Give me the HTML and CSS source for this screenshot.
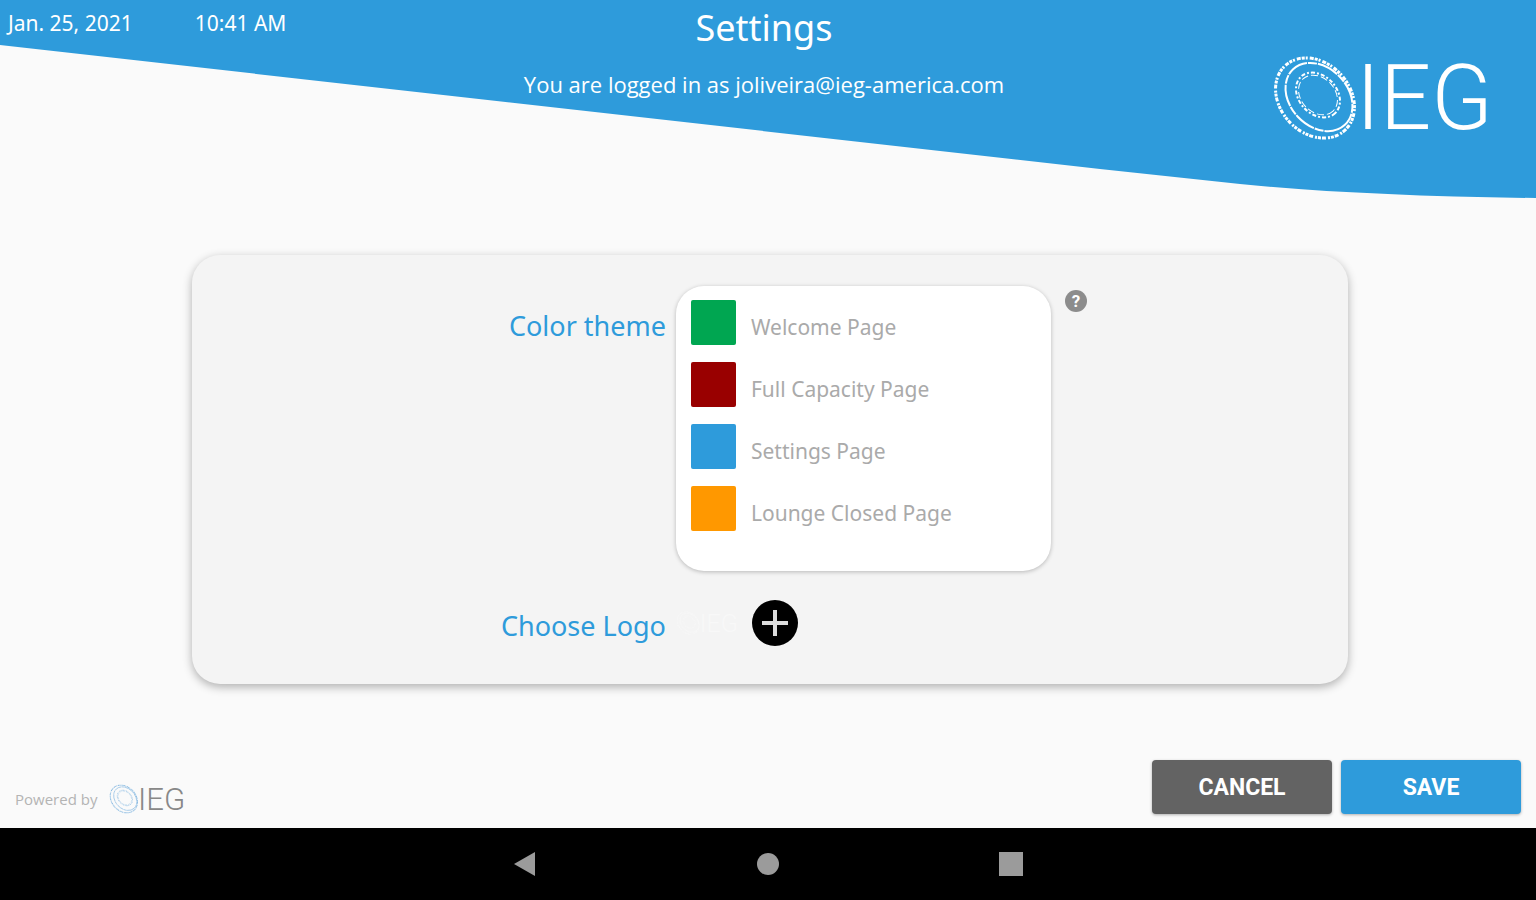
FILE: index.html
```
<!DOCTYPE html>
<html lang="en">
<head>
    <meta charset="UTF-8">
    <meta name="viewport" content="width=device-width, initial-scale=1.0">
    <title>Settings</title>
    <link rel="stylesheet" href="styles.css">
</head>
<body>
    <header class="header">
        <svg class="header-bg" viewBox="0 0 1536 198" preserveAspectRatio="none" aria-hidden="true">
            <path d="M0 0H1536V198Q1360 196 1240 184L1100 169L0 45Z" fill="#2e9bdb"/>
        </svg>
        <div class="datetime">
            <span>Jan. 25, 2021</span>
            <span>10:41 AM</span>
        </div>
        <div class="heading">
            <h1>Settings</h1>
            <p>You are logged in as joliveira@ieg-america.com</p>
        </div>
        <!-- logo is reused below, colored through currentColor and --ring -->
        <svg class="header-logo" viewBox="0 0 220 86" role="img" aria-label="IEG">
            <g id="ieg-logo">
                <g class="ring" fill="none">
                    <ellipse cx="43" cy="43" rx="44" ry="35" transform="rotate(47 43 43)" stroke-width="3" stroke-dasharray="3 1 2 2 4 1"/>
                    <ellipse cx="47" cy="42" rx="38" ry="29" transform="rotate(47 47 42)" stroke-width="2" stroke-dasharray="22 1 9 1"/>
                    <ellipse cx="46" cy="40" rx="25" ry="19" transform="rotate(47 46 40)" stroke-width="2" stroke-dasharray="4 2 2 2"/>
                    <ellipse cx="46" cy="40" rx="22" ry="17" transform="rotate(47 46 40)" stroke-width="1" stroke-dasharray="7 3"/>
                </g>
                <text x="84" y="74" class="logo-text">IEG</text>
            </g>
        </svg>
    </header>

    <main class="card">
        <h2 class="theme-label">Color theme</h2>
        <div class="theme-panel">
            <label><input type="color" value="#00a651">Welcome Page</label>
            <label><input type="color" value="#990000">Full Capacity Page</label>
            <label><input type="color" value="#2e9bdb">Settings Page</label>
            <label><input type="color" value="#ff9800">Lounge Closed Page</label>
        </div>
        <button type="button" class="help" aria-label="Help">?</button>

        <h2 class="logo-label">Choose Logo</h2>
        <div class="logo-picker">
            <svg class="logo-preview" viewBox="0 0 220 86" aria-hidden="true"><use href="#ieg-logo"/></svg>
            <button type="button" class="add" aria-label="Add logo">
                <svg viewBox="0 0 46 46" aria-hidden="true">
                    <circle cx="23" cy="23" r="23" fill="#000"/>
                    <path d="M23 10V36M10 23H36" stroke="#ddd" stroke-width="4"/>
                </svg>
            </button>
        </div>
    </main>

    <footer class="footer">
        <div class="powered">
            <span>Powered by</span>
            <svg class="footer-logo" viewBox="0 0 220 86" role="img" aria-label="IEG"><use href="#ieg-logo"/></svg>
        </div>
        <div class="actions">
            <button type="button" class="cancel">CANCEL</button>
            <button type="button" class="save">SAVE</button>
        </div>
    </footer>

    <nav class="navbar" aria-label="System navigation">
        <button type="button" aria-label="Back">
            <svg viewBox="0 0 24 24"><path d="M1 12L22 0V24Z"/></svg>
        </button>
        <button type="button" aria-label="Home">
            <svg viewBox="0 0 24 24"><circle cx="12" cy="12" r="11"/></svg>
        </button>
        <button type="button" aria-label="Recent apps">
            <svg viewBox="0 0 24 24"><path d="M0 0H24V24H0Z"/></svg>
        </button>
    </nav>
</body>
</html>
```

FILE: styles.css
```
* {
    box-sizing: border-box;
}
body {
    margin: 0;
    min-height: 100vh;
    display: flex;
    flex-direction: column;
    background-color: #fafafa;
    font-family: "Noto Sans", "Open Sans", sans-serif;
}
h1, h2, p {
    margin: 0;
    font-weight: normal;
}
button {
    padding: 0;
    border: none;
    cursor: pointer;
}
svg {
    display: block;
}
.ring {
    stroke: var(--ring, currentColor);
}
.logo-text {
    font-family: Roboto, sans-serif;
    font-size: 90px;
    font-weight: 300;
    fill: currentColor;
}

/* header */
.header {
    position: relative;
    height: 198px;
    padding: 0 44px 0 8px;
    display: grid;
    grid-template-columns: 1fr auto 1fr;
    color: #fff;
}
.header-bg {
    position: absolute;
    top: 0;
    left: 0;
    width: 100%;
    height: 100%;
    z-index: -1;
}
.datetime {
    display: flex;
    gap: 62px;
    padding-top: 8px;
    font-size: 21px;
    line-height: 30px;
}
.heading {
    margin-left: 28px;
    text-align: center;
}
.heading h1 {
    font-size: 36px;
    line-height: 56px;
}
.heading p {
    font-family: "Open Sans", sans-serif;
    font-size: 22px;
    line-height: 56px;
}
.header-logo {
    justify-self: end;
    width: 220px;
    height: 86px;
    margin-top: 55px;
    overflow: visible;
}

/* settings card */
.card {
    margin: 57px 188px 0 192px;
    padding: 31px 0 38px;
    display: grid;
    grid-template-columns: 41% 375px 1fr;
    column-gap: 10px;
    row-gap: 29px;
    border-radius: 28px;
    background-color: #f4f4f4;
    box-shadow: 0 3px 10px rgba(0, 0, 0, 0.3);
}
.card h2 {
    font-size: 27px;
    line-height: 36px;
    text-align: right;
    color: #2e9bdb;
}
.theme-label {
    padding-top: 22px;
}
.theme-panel {
    padding: 14px 15px 40px;
    display: flex;
    flex-direction: column;
    gap: 17px;
    border-radius: 28px;
    background-color: #fff;
    box-shadow: 0 1px 4px rgba(0, 0, 0, 0.25);
}
.theme-panel label {
    display: flex;
    gap: 15px;
    height: 45px;
    font-size: 21px;
    line-height: 54px;
    color: #aaa;
}
.theme-panel input {
    appearance: none;
    width: 45px;
    height: 45px;
    padding: 0;
    border: none;
    background: none;
    cursor: pointer;
}
.theme-panel input::-webkit-color-swatch-wrapper {
    padding: 0;
}
.theme-panel input::-webkit-color-swatch {
    border: none;
    border-radius: 2px;
}
.help {
    width: 22px;
    height: 22px;
    margin: 4px 0 0 4px;
    border-radius: 50%;
    background-color: #8c8c8c;
    color: #fff;
    font: bold 17px/22px Roboto, sans-serif;
}
.logo-label {
    padding-top: 8px;
}
.logo-picker {
    display: flex;
    align-items: center;
    gap: 14px;
}
.logo-preview {
    width: 62px;
    height: 24px;
    color: #f8f8f8;
}
.add {
    width: 46px;
    height: 46px;
    border-radius: 50%;
    background: none;
}

/* footer */
.footer {
    margin-top: auto;
    padding: 0 15px;
    display: flex;
    justify-content: space-between;
    align-items: center;
}
.powered {
    display: flex;
    align-items: center;
    gap: 12px;
    padding-top: 24px;
    font-family: "Open Sans", sans-serif;
    font-size: 15px;
    color: #b4b4b4;
}
.footer-logo {
    width: 76px;
    height: 30px;
    color: #888;
    --ring: #8abbe2;
}
.actions {
    display: flex;
    gap: 9px;
}
.actions button {
    width: 180px;
    height: 54px;
    border-radius: 4px;
    font: bold 23px Roboto, sans-serif;
    color: #fff;
    box-shadow: 0 1px 3px rgba(0, 0, 0, 0.3);
}
.actions .cancel {
    background-color: #636363;
}
.actions .save {
    background-color: #2e9bdb;
}

/* android bar */
.navbar {
    height: 72px;
    margin-top: 14px;
    display: flex;
    justify-content: center;
    align-items: center;
    gap: 219px;
    background-color: #000;
}
.navbar button {
    width: 24px;
    height: 24px;
    background: none;
}
.navbar svg {
    fill: #9b9b9b;
}
```
